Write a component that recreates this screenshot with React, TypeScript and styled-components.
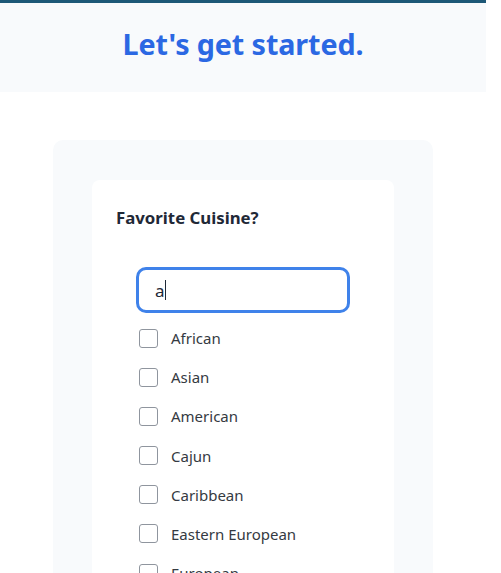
import styled, { createGlobalStyle } from "styled-components";

const GlobalStyle = createGlobalStyle`
  html, body {
    margin: 0;
    padding: 0;
    background: #ffffff;
  }
  body {
    font-family: "Noto Sans", "Open Sans", sans-serif;
    color: #1f2937;
  }
  * {
    box-sizing: border-box;
  }
`;

const Page = styled.div`
  width: 486px;
  border-top: 3px solid #1d5877;
`;

const Header = styled.header`
  background: #f8fafc;
  height: 89px;
  display: flex;
  align-items: center;
  justify-content: center;
  padding-bottom: 8px;
`;

const Title = styled.h1`
  margin: 0;
  font-size: 28.7px;
  font-weight: 700;
  color: #2b68e3;
  letter-spacing: -0.1px;
`;

const Main = styled.main`
  padding: 48px 53px 0;
  display: flex;
  justify-content: center;
`;

const OuterCard = styled.section`
  width: 100%;
  background: #f8fafc;
  border-radius: 10px;
  padding: 40px 39px 0;
`;

const InnerCard = styled.div`
  background: #ffffff;
  border-radius: 8px;
  padding: 24px 24px 0;
`;

const Question = styled.h2`
  margin: 0;
  font-size: 16.8px;
  line-height: 27px;
  font-weight: 700;
  color: #1f2937;
`;

const Body = styled.div`
  padding: 37px 21px 0;
  display: flex;
  flex-direction: column;
`;

const Field = styled.div`
  position: relative;
  width: 212px;
  margin-bottom: 14px;
`;

const SearchInput = styled.input`
  width: 212px;
  height: 44px;
  border: 2px solid #3f82ea;
  box-shadow: 0 0 0 1px #3f82ea;
  border-radius: 9px;
  padding: 0 16px;
  font-family: inherit;
  font-size: 17px;
  color: #1f2937;
  outline: none;
  background: #fff;
  caret-color: transparent;
`;

const Caret = styled.span`
  position: absolute;
  left: 27.5px;
  top: 12px;
  width: 1px;
  height: 20px;
  background: #1f2937;
`;

const OptionList = styled.div`
  display: flex;
  flex-direction: column;
  gap: 15.2px;
  padding-left: 2px;
`;

const Option = styled.label`
  display: flex;
  align-items: center;
  gap: 13px;
  height: 24px;
  font-size: 15px;
  color: #353a42;
  cursor: pointer;
`;

const Box = styled.span`
  width: 19px;
  height: 19px;
  border: 1.5px solid #8f959e;
  border-radius: 3px;
  background: #fff;
  flex-shrink: 0;
`;

const cuisines = [
  "African",
  "Asian",
  "American",
  "Cajun",
  "Caribbean",
  "Eastern European",
  "European",
];

const App = () => {
  return (
    <>
      <GlobalStyle />
      <Page>
        <Header>
          <Title>Let's get started.</Title>
        </Header>
        <Main>
          <OuterCard>
            <InnerCard>
              <Question>Favorite Cuisine?</Question>
              <Body>
                <Field>
                  <SearchInput defaultValue="a" />
                  <Caret />
                </Field>
                <OptionList>
                  {cuisines.map((c) => (
                    <Option key={c}>
                      <Box />
                      {c}
                    </Option>
                  ))}
                </OptionList>
              </Body>
            </InnerCard>
          </OuterCard>
        </Main>
      </Page>
    </>
  );
};

export default App;
